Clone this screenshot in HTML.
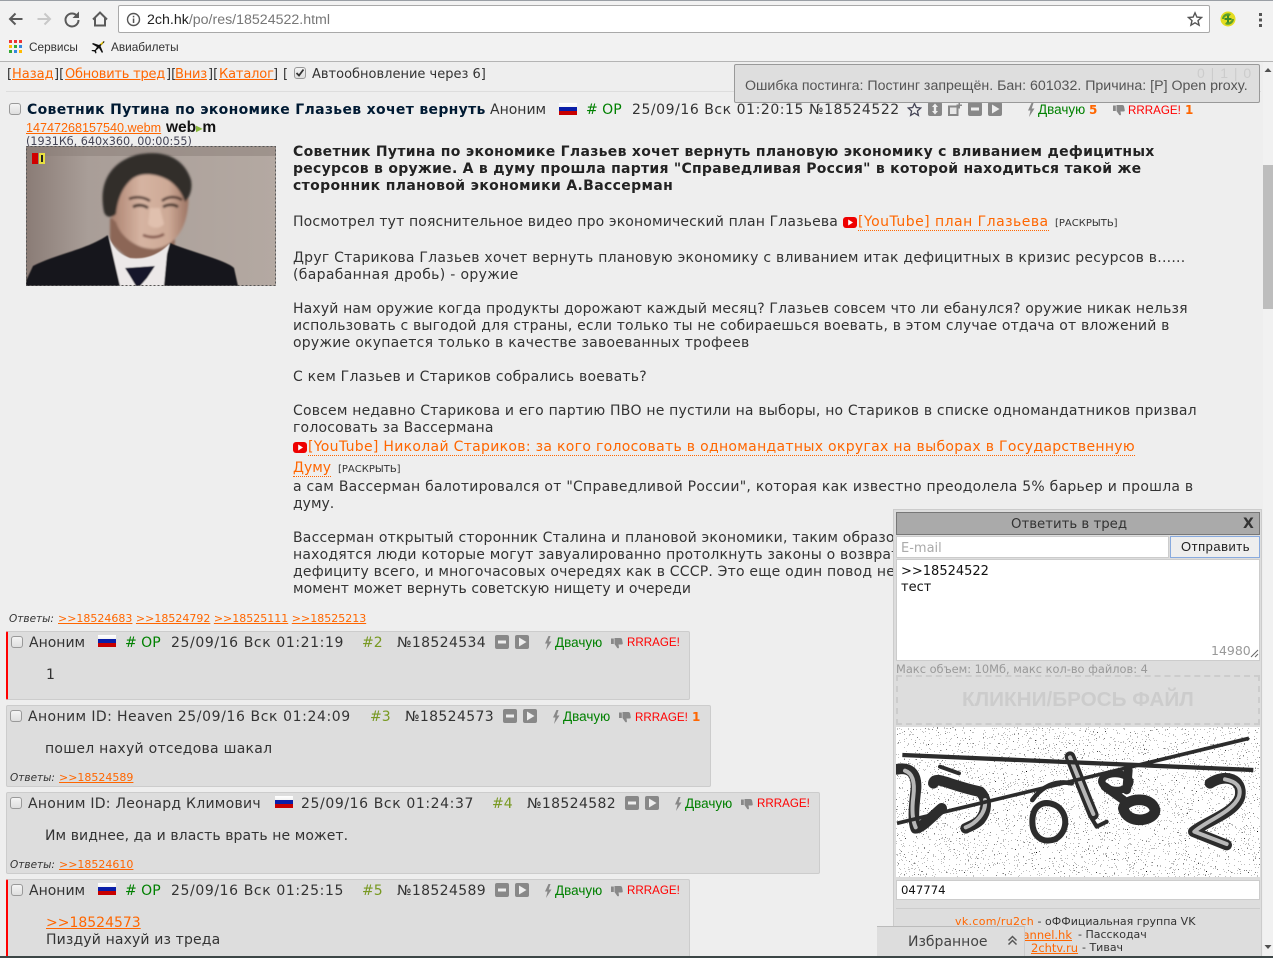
<!DOCTYPE html>
<html lang="ru"><head><meta charset="utf-8"><title>2ch</title>
<style>
html,body{margin:0;padding:0;background:#eee;width:1273px;height:958px;overflow:hidden;}
#w{position:absolute;left:0;top:0;width:1273px;height:958px;overflow:hidden;font-family:"DejaVu Sans",Verdana,"Liberation Sans",sans-serif;font-size:14px;color:#333;}
.a{position:absolute;white-space:nowrap;}
.l{position:absolute;left:293px;white-space:nowrap;line-height:17px;height:17px;}
.b{font-weight:bold;color:#222;}
a,.lnk{color:#ff6600;text-decoration:underline;}
.ytl{text-decoration:none;border-bottom:1px dotted #ff6600;}
.box{position:absolute;background:#ddd;border:1px solid #ccc;border-radius:2px;box-sizing:border-box;}
.red{border-left:2px solid #f00;}
.cb{position:absolute;width:12px;height:12px;box-sizing:border-box;border:1px solid #999;border-radius:3px;background:linear-gradient(#f4f4f4,#dedede);}
.flag{position:absolute;width:18px;height:12px;background:linear-gradient(#fff 0,#f4f4f4 33%,#0a1ea8 33%,#0a1ea8 66%,#c80000 66%);}
.ic{position:absolute;width:14px;height:14px;}
.tb{font-family:"Liberation Sans",sans-serif;}
.g{color:#008000;font-family:"Liberation Sans",sans-serif;font-size:13.500px;}
.r{color:#f00;font-family:"Liberation Sans",sans-serif;font-size:11.600px;}
.num{color:#f60;font-weight:bold;font-size:12px;font-family:"DejaVu Sans",sans-serif;}
.r .num{margin-left:1px;}
.pn{color:#789922;}
.rep{font-size:11px;}
.rep i{color:#333;font-size:10.500px;}
.dt{letter-spacing:.6px;}
.no{letter-spacing:.35px;}
</style></head><body>
<div id="w">
<svg width="0" height="0" style="position:absolute"><defs>
<symbol id="min" viewBox="0 0 14 14"><rect width="14" height="14" rx="2" fill="#888"/><rect x="3" y="5.500" width="8" height="3" fill="#eee"/></symbol>
<symbol id="play" viewBox="0 0 14 14"><rect width="14" height="14" rx="2" fill="#888"/><path d="M4 2.500L11.500 7L4 11.500Z" fill="#eee"/></symbol>
<symbol id="exp" viewBox="0 0 14 14"><rect width="14" height="14" rx="2" fill="#888"/><path d="M7 1.500L10 5H8.200V9H10L7 12.500L4 9H5.800V5H4Z" fill="#eee"/></symbol>
<symbol id="add" viewBox="0 0 14 14"><rect x="1" y="4.500" width="8.500" height="8.500" fill="#e8e8e8" stroke="#888" stroke-width="2"/><path d="M10.500 0H12V2.500H14V4H12V6.500H10.500V4H8.500V2.500H10.500Z" fill="#888"/></symbol>
<symbol id="bolt" viewBox="0 0 8 14"><path d="M4.500 0L1 7.500H3.500L2 14L7.500 5.500H4.700L6.500 0Z" fill="#888"/></symbol>
<symbol id="down" viewBox="0 0 12 12"><path d="M0 1.500H2.800V7H0ZM3.500 1H9.500Q11 1.200 11.200 3L11.800 6.500Q11.800 7.500 10.500 7.500H7.500L8 10.500Q7.500 12 6.300 11L3.500 7Z" fill="#888"/></symbol>
<symbol id="yt" viewBox="0 0 14 11"><rect width="14" height="11" rx="3" fill="#e00"/><path d="M5.200 2.500L10 5.500L5.200 8.500Z" fill="#fff"/></symbol>
</defs></svg>

<!-- browser chrome -->
<div class="a" style="left:0;top:0;width:1273px;height:62px;background:#f2f2f2;border-bottom:1px solid #b4b4b4;box-sizing:border-box;"></div>
<div class="a" style="left:0;top:0;width:1273px;height:1px;background:#9a9fa5;"></div>
<svg class="a" style="left:0;top:0" width="118" height="34" fill="none">
<path d="M22.500 19H10M15.500 13.500L10 19L15.500 24.500" stroke="#5a5a5a" stroke-width="2"/>
<path d="M37.500 19H50M44.500 13.500L50 19L44.500 24.500" stroke="#c8c8c8" stroke-width="2"/>
<path d="M77.500 16.500A6.500 6.500 0 1 0 78.500 20" stroke="#5a5a5a" stroke-width="2"/><path d="M79 11.500V18H72.500Z" fill="#5a5a5a"/>
<path d="M93 19.500L100 12.500L107 19.500M95 18V25.500H105V18" stroke="#5a5a5a" stroke-width="2"/>
</svg>
<div class="a" style="left:118px;top:5px;width:1092px;height:28px;background:#fff;border:1px solid #a9a9a9;border-radius:2px;box-sizing:border-box;"></div>
<svg class="a" style="left:126px;top:12px" width="15" height="15" fill="none"><circle cx="7.500" cy="7.500" r="6" stroke="#555" stroke-width="1.400"/><rect x="6.800" y="6.500" width="1.500" height="4.500" fill="#555"/><rect x="6.800" y="3.800" width="1.500" height="1.600" fill="#555"/></svg>
<div class="a tb" style="left:147px;top:12px;font-size:14.200px;line-height:17px;color:#222;">2ch.hk<span style="color:#777">/po/res/18524522.html</span></div>
<svg class="a" style="left:1187px;top:11px" width="16" height="16" fill="none"><path d="M8 1.800L9.900 6.100L14.500 6.500L11 9.600L12.100 14.200L8 11.800L3.900 14.200L5 9.600L1.500 6.500L6.100 6.100Z" stroke="#555" stroke-width="1.400"/></svg>
<svg class="a" style="left:1220px;top:11px" width="16" height="16"><circle cx="8" cy="8" r="7.500" fill="#e4dc20"/><path d="M2 8A6 6 0 0 1 11 3L9.500 5A4 4 0 0 0 4 8ZM14 8A6 6 0 0 1 5 13L6.500 11A4 4 0 0 0 12 8Z" fill="#5aa02c"/><path d="M7 4.500H9V7H11.500V9H9V11.500H7V9H4.500V7H7Z" fill="#3c8c28"/></svg>
<svg class="a" style="left:1258px;top:12px" width="6" height="16" fill="#555"><rect x="1" y="1" width="3" height="3"/><rect x="1" y="6.500" width="3" height="3"/><rect x="1" y="12" width="3" height="3"/></svg>
<svg class="a" style="left:9px;top:40px" width="13" height="13"><g><rect x="0" y="0" width="3" height="3" fill="#e33"/><rect x="5" y="0" width="3" height="3" fill="#e33"/><rect x="10" y="0" width="3" height="3" fill="#e33"/><rect x="0" y="5" width="3" height="3" fill="#fb0"/><rect x="5" y="5" width="3" height="3" fill="#3a3"/><rect x="10" y="5" width="3" height="3" fill="#38d"/><rect x="0" y="10" width="3" height="3" fill="#3a3"/><rect x="5" y="10" width="3" height="3" fill="#38d"/><rect x="10" y="10" width="3" height="3" fill="#fb0"/></g></svg>
<div class="a tb" style="left:29px;top:40px;font-size:11.800px;line-height:14px;color:#333;">Сервисы</div>
<svg class="a" style="left:91px;top:40px" width="14" height="14"><path d="M13 1L8 5L2 3L1 4L6 7L4 10L1 10L0.500 11L3.500 11.500L4.500 13.500L5.500 13L5 10.500L8 8L11 13L12 12L9.500 6L13.500 2Z" fill="#111"/><path d="M12.500 1L9 4L11 5Z" fill="#ec0"/></svg>
<div class="a tb" style="left:111px;top:40px;font-size:11.800px;line-height:14px;color:#333;">Авиабилеты</div>

<!-- scrollbar -->
<div class="a" style="left:1263px;top:62px;width:10px;height:896px;background:#f1f1f1;"></div>
<div class="a" style="left:1263px;top:165px;width:10px;height:144px;background:#bdbdbd;"></div>
<svg class="a" style="left:1263px;top:66px" width="10" height="8"><path d="M1.500 6L5 2L8.500 6Z" fill="#505050"/></svg>
<svg class="a" style="left:1263px;top:943px" width="10" height="8"><path d="M1.500 2L5 6L8.500 2Z" fill="#505050"/></svg>

<!-- top nav -->
<div class="a" style="left:7px;top:66px;font-size:13px;line-height:17px;">[</div>
<div class="a" style="left:12px;top:66px;font-size:13px;line-height:17px;"><a>Назад</a></div>
<div class="a" style="left:54px;top:66px;font-size:13px;line-height:17px;">][</div>
<div class="a" style="left:65px;top:66px;font-size:13px;line-height:17px;letter-spacing:-.23px;"><a>Обновить тред</a></div>
<div class="a" style="left:166px;top:66px;font-size:13px;line-height:17px;">][</div>
<div class="a" style="left:175px;top:66px;font-size:13px;line-height:17px;letter-spacing:-.2px;"><a>Вниз</a></div>
<div class="a" style="left:208px;top:66px;font-size:13px;line-height:17px;">][</div>
<div class="a" style="left:219px;top:66px;font-size:13px;line-height:17px;letter-spacing:-.15px;"><a>Каталог</a></div>
<div class="a" style="left:273px;top:66px;font-size:13px;line-height:17px;">]</div>
<div class="a" style="left:283px;top:66px;font-size:13px;line-height:17px;">[</div>
<div class="cb" style="left:294px;top:67px;"></div>
<svg class="a" style="left:294px;top:67px" width="12" height="12" fill="none"><path d="M2.500 6L5 8.500L9.500 2.500" stroke="#333" stroke-width="1.800"/></svg>
<div class="a" style="left:312px;top:66px;font-size:13px;line-height:17px;color:#333;">Автообновление через 6]</div>
<div class="a" style="left:6px;top:91px;width:1255px;height:1px;background:#ddd;"></div>

<!-- OP -->
<div class="cb" style="left:9px;top:103px;"></div>
<div class="a" style="left:27px;top:101px;font-size:14px;line-height:18px;font-weight:bold;color:#001a33;letter-spacing:.32px;">Советник Путина по экономике Глазьев хочет вернуть</div>
<div class="a" style="left:490px;top:102px;line-height:17px;">Аноним</div>
<div class="flag" style="left:559px;top:103px;"></div>
<div class="a" style="left:586px;top:102px;line-height:17px;color:#008000;"># OP</div>
<div class="a" style="left:632px;top:102px;line-height:17px;letter-spacing:.55px;">25/09/16 Вск 01:20:15 №18524522</div>
<svg class="a" style="left:907px;top:102px" width="15" height="15" fill="none"><path d="M7.500 1.500L9.300 5.500L13.800 6L10.400 9L11.400 13.400L7.500 11.100L3.600 13.400L4.600 9L1.200 6L5.700 5.500Z" stroke="#445" stroke-width="1.300"/></svg>
<svg class="ic" style="left:928px;top:102px"><use href="#exp"/></svg>
<svg class="ic" style="left:948px;top:102px"><use href="#add"/></svg>
<svg class="ic" style="left:968px;top:102px"><use href="#min"/></svg>
<svg class="ic" style="left:988px;top:102px"><use href="#play"/></svg>
<svg class="a" style="left:1027px;top:103px" width="8" height="14"><use href="#bolt"/></svg>
<div class="a g" style="left:1038px;top:102px;line-height:16px;">Двачую <span class="num">5</span></div>
<svg class="a" style="left:1113px;top:104px" width="12" height="12"><use href="#down"/></svg>
<div class="a r" style="left:1128px;top:102px;line-height:16px;">RRRAGE! <span class="num">1</span></div>

<div class="a" style="left:26px;top:120px;font-size:12.600px;line-height:15px;"><a style="font-family:'Liberation Sans',sans-serif;">14747268157540.webm</a></div>
<div class="a" style="left:166px;top:120px;font-size:15.500px;line-height:16px;font-weight:bold;color:#111;font-family:'Liberation Sans',sans-serif;">web<span style="color:#8ab83c;font-size:8px;vertical-align:1px;">&#9654;</span>m</div>
<div class="a" style="left:26px;top:135px;font-size:11.200px;line-height:13px;color:#445;">(1931Кб, 640x360, 00:00:55)</div>

<svg class="a" style="left:26px;top:146px" width="250" height="140" viewBox="0 0 250 140">
<defs>
<linearGradient id="bg" x1="0" x2="1"><stop offset="0" stop-color="#8a7c76"/><stop offset=".25" stop-color="#a99e98"/><stop offset="1" stop-color="#b4a9a2"/></linearGradient>
<linearGradient id="fc" x1="0" x2="1"><stop offset="0" stop-color="#a87e6c"/><stop offset=".4" stop-color="#d6b4a2"/><stop offset=".75" stop-color="#cda996"/><stop offset="1" stop-color="#9c7463"/></linearGradient>
<filter id="bl"><feGaussianBlur stdDeviation="1"/></filter>
<filter id="bl2"><feGaussianBlur stdDeviation=".6"/></filter>
</defs>
<rect width="250" height="140" fill="url(#bg)"/>
<rect width="250" height="10" fill="#8a7e78" opacity=".5"/>
<g filter="url(#bl)">
<path d="M84 72L150 80L148 106L108 118L84 96Z" fill="#8c6656"/>
<path d="M84 52C84 30 110 22 130 24C152 26 165 40 162 60C160 82 150 100 128 103C110 103 94 90 90 76C84 72 82 62 84 52Z" fill="url(#fc)"/>
<path d="M78 66C73 42 80 18 110 9C138 3 158 12 165 34C167 44 163 52 159 56C156 46 148 36 138 32C126 27 114 27 106 33C98 40 92 50 90 68C86 72 80 72 78 66Z" fill="#332e2c"/>
<path d="M103 53C110 50 118 51 124 55M136 55C142 50 150 50 156 54" stroke="#4a3229" stroke-width="2.500" fill="none"/>
<path d="M107 61C112 58 118 59 122 62M137 61C142 58 148 58 152 61" stroke="#3f2d27" stroke-width="2.800" fill="none"/>
<path d="M124 62L122 78C126 83 134 83 138 78L134 62Z" fill="#e0c0ae"/>
<path d="M117 89C124 92 132 92 138 88" stroke="#7d4f44" stroke-width="2.500" fill="none"/>
</g>
<g filter="url(#bl2)">
<path d="M0 140V135L7 120C30 108 60 104 82 89L98 125L125 118L144 97C165 106 200 114 208 122L212 140Z" fill="#18161a"/>
<path d="M82 88C86 100 92 108 104 112C120 114 134 108 144 97L141 108L138 140H94Z" fill="#ece8e8"/>
<path d="M99 122L129 120L121 132L114 140H110L104 130Z" fill="#14142c"/>
</g>
<rect x="6" y="7" width="6" height="11" fill="#d00000"/><rect x="13" y="7" width="6" height="11" fill="#e8e040"/><rect x="15" y="9" width="2" height="7" fill="#222"/>
<rect x=".5" y=".5" width="249" height="139" fill="none" stroke="#555" stroke-dasharray="2 2"/>
</svg>

<div class="l b" style="top:144px;letter-spacing:.3px;">Советник Путина по экономике Глазьев хочет вернуть плановую экономику с вливанием дефицитных</div>
<div class="l b" style="top:161px;letter-spacing:.27px;">ресурсов в оружие. А в думу прошла партия "Справедливая Россия" в которой находиться такой же</div>
<div class="l b" style="top:178px;letter-spacing:.35px;">сторонник плановой экономики А.Вассерман</div>
<div class="l" style="top:214px;letter-spacing:.14px;">Посмотрел тут пояснительное видео про экономический план Глазьева</div>
<svg class="a" style="left:843px;top:217px" width="14" height="11"><use href="#yt"/></svg>
<div class="l" style="left:858px;top:214px;letter-spacing:.47px;"><a class="ytl">[YouTube] план Глазьева</a></div>
<div class="l" style="left:1055px;top:215px;font-size:10px;">[РАСКРЫТЬ]</div>
<div class="l" style="top:250px;letter-spacing:.245px;">Друг Старикова Глазьев хочет вернуть плановую экономику с вливанием итак дефицитных в кризис ресурсов в......</div>
<div class="l" style="top:267px;letter-spacing:.33px;">(барабанная дробь) - оружие</div>
<div class="l" style="top:301px;letter-spacing:.15px;">Нахуй нам оружие когда продукты дорожают каждый месяц? Глазьев совсем что ли ебанулся? оружие никак нельзя</div>
<div class="l" style="top:318px;letter-spacing:.16px;">использовать с выгодой для страны, если только ты не собираешься воевать, в этом случае отдача от вложений в</div>
<div class="l" style="top:335px;letter-spacing:.24px;">оружие окупается только в качестве завоеванных трофеев</div>
<div class="l" style="top:369px;letter-spacing:.23px;">С кем Глазьев и Стариков собрались воевать?</div>
<div class="l" style="top:403px;letter-spacing:.19px;">Совсем недавно Старикова и его партию ПВО не пустили на выборы, но Стариков в списке одномандатников призвал</div>
<div class="l" style="top:420px;letter-spacing:.2px;">голосовать за Вассермана</div>
<svg class="a" style="left:293px;top:442px" width="14" height="11"><use href="#yt"/></svg>
<div class="l" style="left:308px;top:439px;letter-spacing:.31px;"><a class="ytl">[YouTube] Николай Стариков: за кого голосовать в одномандатных округах на выборах в Государственную</a></div>
<div class="l" style="top:460px;"><a class="ytl">Думу</a></div>
<div class="l" style="left:338px;top:461px;font-size:10px;">[РАСКРЫТЬ]</div>
<div class="l" style="top:479px;letter-spacing:.25px;">а сам Вассерман балотировался от "Справедливой России", которая как известно преодолела 5% барьер и прошла в</div>
<div class="l" style="top:496px;">думу.</div>
<div class="l" style="top:530px;letter-spacing:.2px;">Вассерман открытый сторонник Сталина и плановой экономики, таким образом</div>
<div class="l" style="top:547px;letter-spacing:.2px;">находятся люди которые могут завуалированно протолкнуть законы о возврате</div>
<div class="l" style="top:564px;letter-spacing:.2px;">дефициту всего, и многочасовых очередях как в СССР. Это еще один повод не</div>
<div class="l" style="top:581px;letter-spacing:.06px;">момент может вернуть советскую нищету и очереди</div>
<div class="a rep" style="left:9px;top:612px;line-height:14px;"><i>Ответы:</i></div>
<div class="a rep" style="left:58px;top:612px;line-height:14px;"><a>&gt;&gt;18524683</a> <a>&gt;&gt;18524792</a> <a>&gt;&gt;18525111</a> <a>&gt;&gt;18525213</a></div>

<!-- post 2 -->
<div class="box red" style="left:6px;top:631px;width:684px;height:69px;"></div>
<div class="cb" style="left:11px;top:636px;"></div>
<div class="a" style="left:29px;top:635px;line-height:17px;">Аноним</div>
<div class="flag" style="left:98px;top:635px;"></div>
<div class="a" style="left:125px;top:635px;line-height:17px;color:#008000;"># OP</div>
<div class="a dt" style="left:171px;top:635px;line-height:17px;">25/09/16 Вск 01:21:19</div>
<div class="a pn" style="left:362px;top:635px;line-height:17px;">#2</div>
<div class="a no" style="left:397px;top:635px;line-height:17px;">№18524534</div>
<svg class="ic" style="left:495px;top:635px"><use href="#min"/></svg>
<svg class="ic" style="left:515px;top:635px"><use href="#play"/></svg>
<svg class="a" style="left:544px;top:636px" width="8" height="14"><use href="#bolt"/></svg>
<div class="a g" style="left:555px;top:635px;line-height:16px;">Двачую</div>
<svg class="a" style="left:611px;top:637px" width="12" height="12"><use href="#down"/></svg>
<div class="a r" style="left:627px;top:635px;line-height:16px;">RRRAGE!</div>
<div class="a" style="left:46px;top:667px;line-height:17px;">1</div>

<!-- post 3 -->
<div class="box" style="left:6px;top:705px;width:705px;height:82px;"></div>
<div class="cb" style="left:10px;top:710px;"></div>
<div class="a" style="left:28px;top:709px;line-height:17px;"><span style="letter-spacing:.4px">Аноним ID: Heaven </span><span class="dt">25/09/16 Вск 01:24:09</span></div>
<div class="a pn" style="left:370px;top:709px;line-height:17px;">#3</div>
<div class="a no" style="left:405px;top:709px;line-height:17px;">№18524573</div>
<svg class="ic" style="left:503px;top:709px"><use href="#min"/></svg>
<svg class="ic" style="left:523px;top:709px"><use href="#play"/></svg>
<svg class="a" style="left:552px;top:710px" width="8" height="14"><use href="#bolt"/></svg>
<div class="a g" style="left:563px;top:709px;line-height:16px;">Двачую</div>
<svg class="a" style="left:619px;top:711px" width="12" height="12"><use href="#down"/></svg>
<div class="a r" style="left:635px;top:709px;line-height:16px;">RRRAGE! <span class="num">1</span></div>
<div class="a" style="left:45px;top:741px;line-height:17px;letter-spacing:.27px;">пошел нахуй отседова шакал</div>
<div class="a rep" style="left:10px;top:771px;line-height:14px;"><i>Ответы:</i></div>
<div class="a rep" style="left:59px;top:771px;line-height:14px;"><a>&gt;&gt;18524589</a></div>

<!-- post 4 -->
<div class="box" style="left:6px;top:792px;width:814px;height:82px;"></div>
<div class="cb" style="left:10px;top:797px;"></div>
<div class="a" style="left:28px;top:796px;line-height:17px;letter-spacing:.26px;">Аноним ID: Леонард Климович</div>
<div class="flag" style="left:275px;top:796px;"></div>
<div class="a dt" style="left:301px;top:796px;line-height:17px;">25/09/16 Вск 01:24:37</div>
<div class="a pn" style="left:492px;top:796px;line-height:17px;">#4</div>
<div class="a no" style="left:527px;top:796px;line-height:17px;">№18524582</div>
<svg class="ic" style="left:625px;top:796px"><use href="#min"/></svg>
<svg class="ic" style="left:645px;top:796px"><use href="#play"/></svg>
<svg class="a" style="left:674px;top:797px" width="8" height="14"><use href="#bolt"/></svg>
<div class="a g" style="left:685px;top:796px;line-height:16px;">Двачую</div>
<svg class="a" style="left:741px;top:798px" width="12" height="12"><use href="#down"/></svg>
<div class="a r" style="left:757px;top:796px;line-height:16px;">RRRAGE!</div>
<div class="a" style="left:45px;top:828px;line-height:17px;letter-spacing:.08px;">Им виднее, да и власть врать не может.</div>
<div class="a rep" style="left:10px;top:858px;line-height:14px;"><i>Ответы:</i></div>
<div class="a rep" style="left:59px;top:858px;line-height:14px;"><a>&gt;&gt;18524610</a></div>

<!-- post 5 -->
<div class="box red" style="left:6px;top:879px;width:684px;height:79px;border-bottom:0;"></div>
<div class="cb" style="left:11px;top:884px;"></div>
<div class="a" style="left:29px;top:883px;line-height:17px;">Аноним</div>
<div class="flag" style="left:98px;top:883px;"></div>
<div class="a" style="left:125px;top:883px;line-height:17px;color:#008000;"># OP</div>
<div class="a dt" style="left:171px;top:883px;line-height:17px;">25/09/16 Вск 01:25:15</div>
<div class="a pn" style="left:362px;top:883px;line-height:17px;">#5</div>
<div class="a no" style="left:397px;top:883px;line-height:17px;">№18524589</div>
<svg class="ic" style="left:495px;top:883px"><use href="#min"/></svg>
<svg class="ic" style="left:515px;top:883px"><use href="#play"/></svg>
<svg class="a" style="left:544px;top:884px" width="8" height="14"><use href="#bolt"/></svg>
<div class="a g" style="left:555px;top:883px;line-height:16px;">Двачую</div>
<svg class="a" style="left:611px;top:885px" width="12" height="12"><use href="#down"/></svg>
<div class="a r" style="left:627px;top:883px;line-height:16px;">RRRAGE!</div>
<div class="a" style="left:46px;top:915px;line-height:17px;"><a>&gt;&gt;18524573</a></div>
<div class="a" style="left:46px;top:932px;line-height:17px;letter-spacing:.14px;">Пиздуй нахуй из треда</div>

<!-- notice -->
<div class="a" style="left:734px;top:64px;width:526px;height:39px;background:#dedede;border:1px solid #999;border-radius:2px;box-sizing:border-box;"></div>
<div class="a tb" style="left:745px;top:77px;font-size:14.200px;line-height:18px;color:#555;">Ошибка постинга: Постинг запрещён. Бан: 601032. Причина: [P] Open proxy.</div>
<div class="a tb" style="left:1197px;top:65px;font-size:14px;line-height:16px;color:#ccc;letter-spacing:1px;">0 | 1 | 0</div>

<!-- reply form -->
<div class="a" style="left:893px;top:509px;width:369px;height:449px;background:#ddd;border:1px solid #ccc;box-sizing:border-box;"></div>
<div class="a" style="left:896px;top:512px;width:364px;height:23px;background:#aaa;border:1px solid #777;box-sizing:border-box;"></div>
<div class="a" style="left:1011px;top:517px;font-size:13.300px;line-height:16px;color:#333;">Ответить в тред</div>
<div class="a" style="left:1243px;top:516px;font-size:14px;line-height:17px;font-weight:bold;color:#333;">X</div>
<div class="a" style="left:896px;top:536px;width:273px;height:22px;background:#fff;border:1px solid #ccc;box-sizing:border-box;"></div>
<div class="a" style="left:901px;top:541px;font-size:13px;line-height:16px;color:#aaa;">E-mail</div>
<div class="a" style="left:1170px;top:536px;width:90px;height:22px;background:#eee;border:1px solid #88aade;box-sizing:border-box;"></div>
<div class="a tb" style="left:1181px;top:539px;font-size:13px;line-height:16px;color:#222;letter-spacing:.5px;">Отправить</div>
<div class="a" style="left:896px;top:559px;width:364px;height:102px;background:#fff;border:1px solid #ccc;box-sizing:border-box;"></div>
<div class="a" style="left:901px;top:564px;font-size:13px;line-height:16px;color:#111;">&gt;&gt;18524522</div>
<div class="a" style="left:901px;top:580px;font-size:13px;line-height:16px;color:#111;">тест</div>
<div class="a" style="left:1211px;top:643px;font-size:12.500px;line-height:16px;color:#999;">14980</div>
<svg class="a" style="left:1250px;top:649px" width="9" height="9"><path d="M1 8L8 1M5 8L8 5" stroke="#666"/></svg>
<div class="a" style="left:896px;top:662px;font-size:11.400px;line-height:14px;color:#999;">Макс объем: 10Мб, макс кол-во файлов: 4</div>
<div class="a" style="left:896px;top:675px;width:364px;height:50px;border:2px dashed #ccc;box-sizing:border-box;"></div>
<div class="a tb" style="left:962px;top:688px;font-size:20.700px;line-height:24px;font-weight:bold;color:#ccc;">КЛИКНИ/БРОСЬ ФАЙЛ</div>

<!-- captcha -->
<svg class="a" style="left:896px;top:727px" width="364" height="150" viewBox="33 21 1092 450" preserveAspectRatio="none">
<defs>
<filter id="nz" x="0" y="0" width="100%" height="100%" filterUnits="objectBoundingBox"><feTurbulence type="fractalNoise" baseFrequency=".3" numOctaves="1" seed="7"/><feColorMatrix values="0 0 0 0 0 0 0 0 0 0 0 0 0 0 0 1 0 0 0 0"/><feComponentTransfer><feFuncA type="discrete" tableValues="0 0 0 0 0 0 0 0 0 0 0 0 0 0 1 1 1 1 1 1"/></feComponentTransfer></filter>
</defs>
<rect x="33" y="21" width="1092" height="450" fill="#fff"/>
<rect x="33" y="21" width="1092" height="450" fill="#000" filter="url(#nz)"/>
<g fill="none" stroke-linecap="round" stroke-linejoin="round">
<g stroke="#2c2c2c" stroke-width="32">
<path d="M35 148C75 140 95 160 93 205C88 250 82 300 92 325C110 325 140 290 170 265"/>
<path d="M145 190C150 165 190 195 285 215C310 240 305 275 285 300C270 315 250 320 242 325"/>
<path d="M555 110C575 160 600 225 625 285"/>
<path d="M975 190C1020 160 1075 175 1065 230C1050 280 960 305 925 335L1025 375"/>
</g>
<path d="M620 295L635 320L665 305" stroke="#2c2c2c" stroke-width="12"/>
<g stroke="#b8b8b8" stroke-width="12">
<path d="M60 152C85 160 90 190 85 230C80 270 82 300 92 322"/>
<path d="M242 322C270 312 305 280 300 240"/>
<path d="M555 112C575 160 600 225 625 282"/>
<path d="M1020 178C1055 185 1070 200 1062 230C1045 275 960 305 928 335L1025 372"/>
</g>
<path d="M165 140L222 160" stroke="#2c2c2c" stroke-width="12"/>
<path d="M442 305C442 255 475 240 510 255C550 275 552 335 510 358C468 372 442 345 442 305Z" stroke="#2c2c2c" stroke-width="18"/>
<path d="M442 240C470 200 510 180 560 190" stroke="#2c2c2c" stroke-width="14"/>
<path d="M650 185C650 155 725 150 735 185C730 220 660 220 650 185Z" stroke="#2c2c2c" stroke-width="22"/>
<path d="M715 265C720 235 800 225 810 270C810 305 725 315 715 265Z" stroke="#2c2c2c" stroke-width="32"/>
<path d="M660 200L715 240M730 150L725 210" stroke="#2c2c2c" stroke-width="26"/>
<path d="M52 105L1105 150" stroke="#2c2c2c" stroke-width="13" stroke-linecap="butt"/>
<path d="M36 310L1092 55" stroke="#2c2c2c" stroke-width="11" stroke-linecap="butt"/>
</g>
</svg>
<div class="a" style="left:896px;top:880px;width:364px;height:20px;background:#fff;border:1px solid #ccc;box-sizing:border-box;"></div>
<div class="a" style="left:901px;top:883px;font-size:11.700px;line-height:15px;color:#111;">047774</div>
<div class="a" style="left:896px;top:908px;width:364px;height:1px;background:#ccc;"></div>
<div class="a" style="left:955px;top:915px;font-size:11px;line-height:14px;"><a style="text-decoration:none;letter-spacing:.33px;">vk.com/ru2ch</a> - оФФициальная группа VK</div>
<div class="a" style="right:201px;top:928px;font-size:11.500px;line-height:14px;"><a>passchannel.hk</a></div>
<div class="a" style="left:1078px;top:928px;font-size:11px;line-height:14px;">- Пасскодач</div>
<div class="a" style="left:1031px;top:941px;font-size:11.500px;line-height:14px;"><a>2chtv.ru</a></div>
<div class="a" style="left:1082px;top:941px;font-size:11px;line-height:14px;">- Тивач</div>

<!-- favourites -->
<div class="a" style="left:877px;top:926px;width:148px;height:32px;background:#ddd;border-top:1px solid #bbb;border-right:1px solid #ccc;box-sizing:border-box;"></div>
<div class="a" style="left:908px;top:934px;font-size:14px;line-height:17px;color:#444;">Избранное</div>
<svg class="a" style="left:1007px;top:935px" width="11" height="11" fill="none" stroke="#555" stroke-width="1.500"><path d="M1.500 5.500L5.500 1.500L9.500 5.500M1.500 9.500L5.500 5.500L9.500 9.500"/></svg>
<div class="a" style="left:0;top:956px;width:1273px;height:2px;background:#3c4646;"></div>
</div>
</body></html>
